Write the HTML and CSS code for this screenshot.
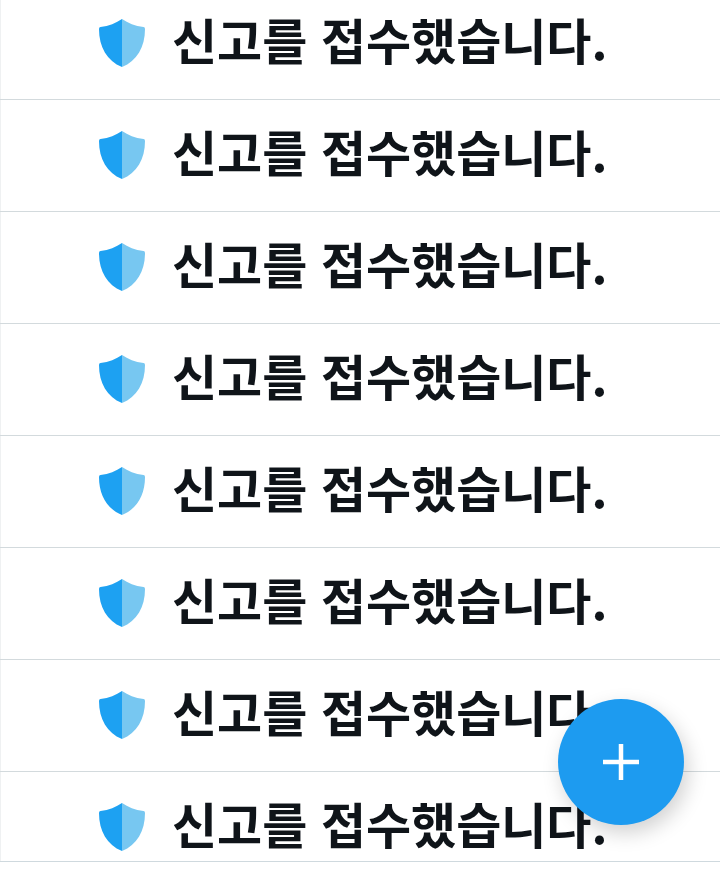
FILE: index.html
```html
<!DOCTYPE html>
<html lang="ko">
<head>
<meta charset="utf-8">
<meta name="viewport" content="width=device-width, initial-scale=1">
<title>알림</title>
<link rel="stylesheet" href="styles.css">
</head>
<body>
<svg class="defs" aria-hidden="true">
  <symbol id="shield" viewBox="0 0 48 48">
    <path fill="#1da1f2" d="M24 0C18 4 11 7 2.500 8Q1 8.200 1 10C1 28 9 42 24 48Z"/>
    <path fill="#77c7f1" d="M24 0C30 4 37 7 45.500 8Q47 8.200 47 10C47 28 39 42 24 48Z"/>
  </symbol>
</svg>
<main class="feed">
  <ul class="list">
    <li class="item"><svg class="icon" aria-hidden="true"><use href="#shield"/></svg><span class="text">신고를 접수했습니다.</span></li>
    <li class="item"><svg class="icon" aria-hidden="true"><use href="#shield"/></svg><span class="text">신고를 접수했습니다.</span></li>
    <li class="item"><svg class="icon" aria-hidden="true"><use href="#shield"/></svg><span class="text">신고를 접수했습니다.</span></li>
    <li class="item"><svg class="icon" aria-hidden="true"><use href="#shield"/></svg><span class="text">신고를 접수했습니다.</span></li>
    <li class="item"><svg class="icon" aria-hidden="true"><use href="#shield"/></svg><span class="text">신고를 접수했습니다.</span></li>
    <li class="item"><svg class="icon" aria-hidden="true"><use href="#shield"/></svg><span class="text">신고를 접수했습니다.</span></li>
    <li class="item"><svg class="icon" aria-hidden="true"><use href="#shield"/></svg><span class="text">신고를 접수했습니다.</span></li>
    <li class="item"><svg class="icon" aria-hidden="true"><use href="#shield"/></svg><span class="text">신고를 접수했습니다.</span></li>
  </ul>
</main>
<button class="compose" type="button" aria-label="새 글 작성">
  <svg class="plus" viewBox="0 0 36 36" aria-hidden="true"><path d="M18 0V36M0 18H36" stroke="#fff" stroke-width="4.500"/></svg>
</button>
</body>
</html>
```
FILE: styles.css
```css
* {
  box-sizing: border-box;
}

body {
  margin: 0;
  background: #fff;
  color: #0f1419;
  font-family: "Noto Sans CJK KR", sans-serif;
}

.defs {
  position: absolute;
  width: 0;
  height: 0;
}

.feed {
  box-shadow: inset 1px 0 #eff1f2;
  border-bottom: 1px solid #cfd9de;
  overflow: hidden;
  height: calc(100vh - 9px);
}

.list {
  margin: -12px 0 0;
  padding: 0;
  list-style: none;
}

.item {
  display: flex;
  align-items: flex-start;
  gap: 26px;
  height: 112px;
  padding: 31px 0 0 98px;
  border-bottom: 1px solid #d3dadd;
}

.icon {
  flex: none;
  width: 48px;
  height: 48px;
}

.text {
  font-size: 49px;
  line-height: 40px;
  font-weight: 700;
  white-space: nowrap;
}

.compose {
  position: fixed;
  right: 36px;
  bottom: 46px;
  display: grid;
  place-items: center;
  width: 126px;
  height: 126px;
  padding: 0;
  border: 0;
  border-radius: 50%;
  background: #1d9bf0;
  box-shadow: 4px 8px 20px rgba(0, 0, 0, 0.18);
}

.plus {
  width: 36px;
  height: 36px;
}
```
